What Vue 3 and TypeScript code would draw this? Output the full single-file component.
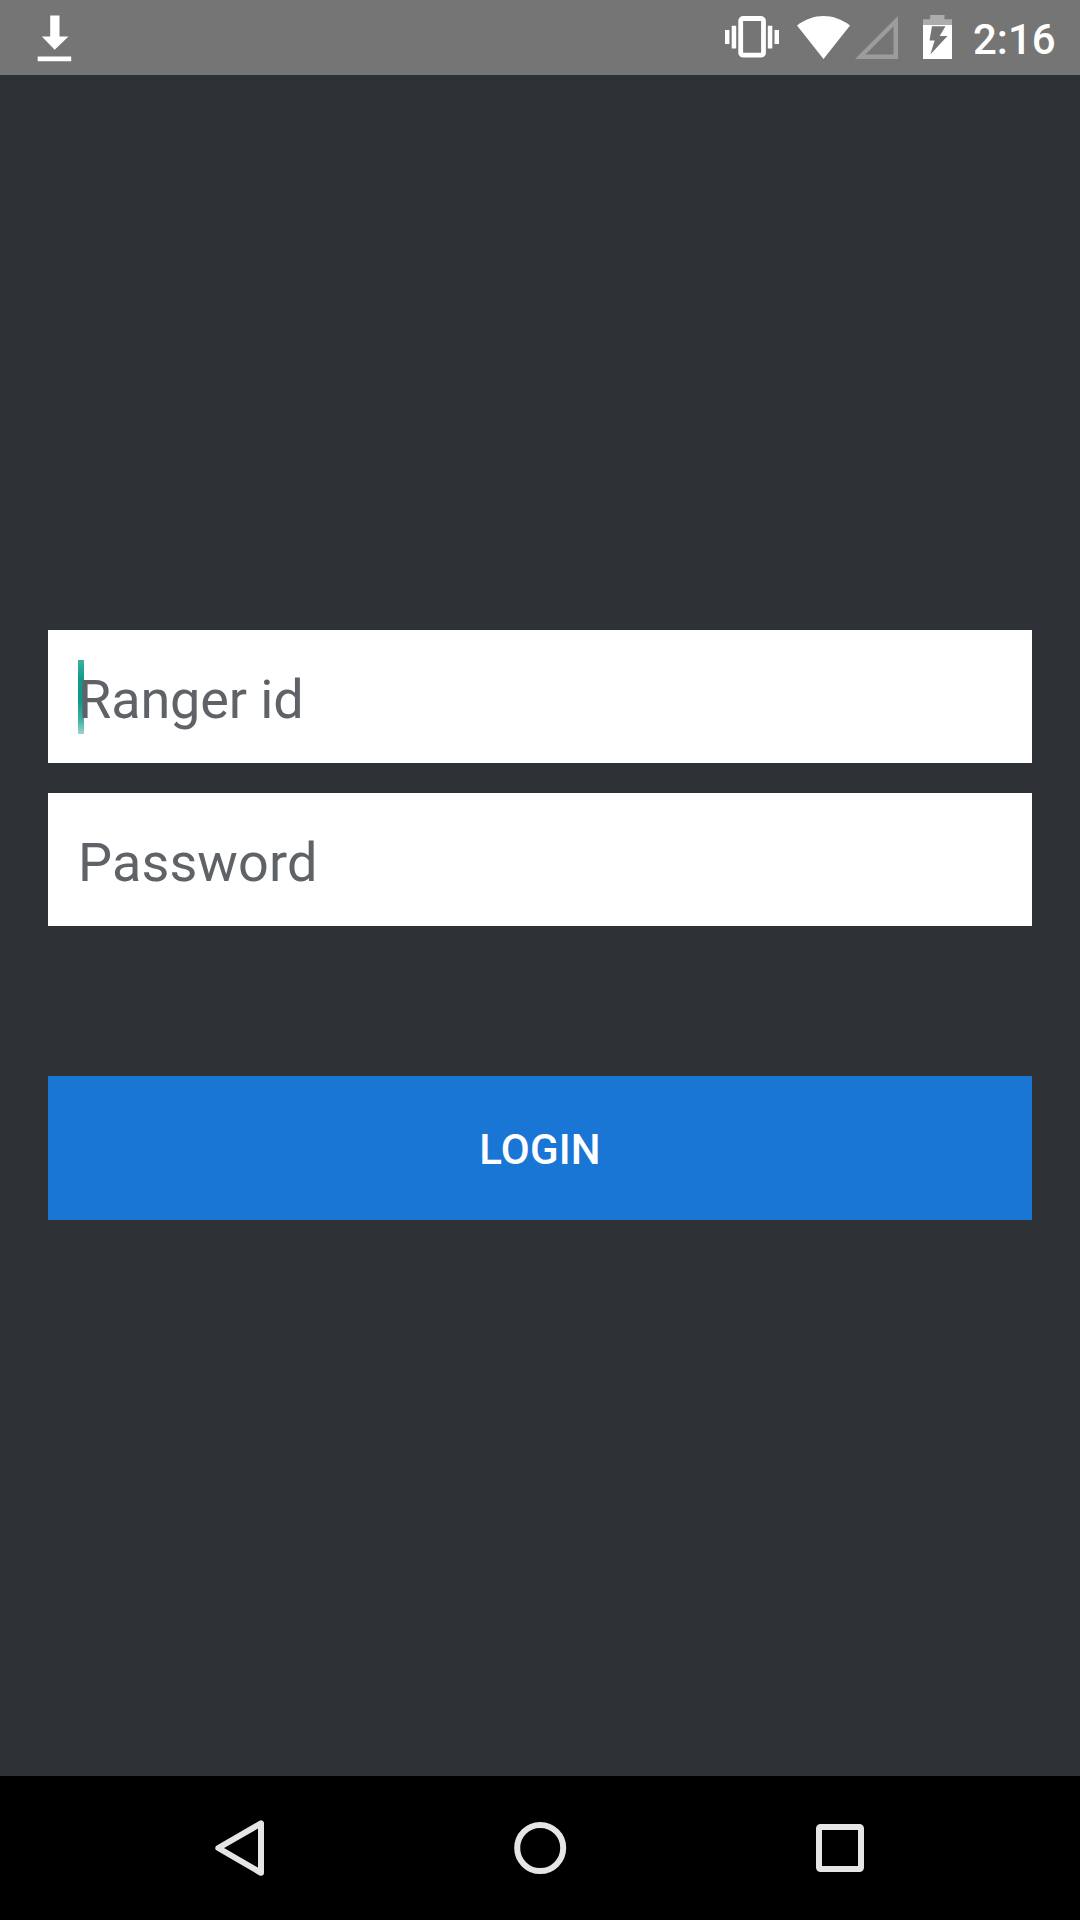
<script setup lang="ts">
import { ref } from 'vue'

interface Field {
  id: string
  hint: string
  focused: boolean
}

const time = ref('2:16')
const fields = ref<Field[]>([
  { id: 'ranger', hint: 'Ranger id', focused: true },
  { id: 'password', hint: 'Password', focused: false },
])
</script>

<template>
  <div class="screen">
    <header class="status-bar">
      <svg class="download" width="35" height="47" viewBox="-0.5 -0.5 35 47" fill="#fff">
        <path d="M12.700 0H22v21h9L17.200 34.200 4.300 21h8.400z" />
        <path d="M0.200 41h33.500v4.700H0.200z" />
      </svg>
      <div class="indicators">
        <svg class="vibrate" width="54" height="42" viewBox="0 0 54 42" fill="#fff">
          <rect x="15.700" y="2.500" width="22.800" height="36.700" rx="2.500" fill="none" stroke="#fff" stroke-width="4.800" />
          <path d="M0 14h4.400v14H0zM6.700 9.700h4.500v22.800H6.700zM42.800 9.700h4.500v22.800h-4.500zM49.500 14H54v14h-4.500z" />
        </svg>
        <svg class="wifi" width="54" height="43" viewBox="0 0 54 43">
          <path d="M0 9.500C8 3.300 17.500 0 26.500 0S45 3.300 53 9.500L26.500 43z" fill="#fff" />
        </svg>
        <svg class="signal" width="43" height="43" viewBox="0 0 43 43">
          <path d="M0 43L43 0v43zM10.500 38.500H38.500V10.500z" fill="#9c9c9c" fill-rule="evenodd" />
        </svg>
        <svg class="battery" width="29" height="44" viewBox="0 0 29 44">
          <path d="M7.200 0h14.300v4.200H29V10H0V4.200h7.200z" fill="#acacac" />
          <path d="M0 10h29v34H0z" fill="#fff" />
          <path d="M9 11.200h13.500L16.700 21H24.500L7.300 39.500 11.700 25.500H6.500z" fill="#757575" />
        </svg>
        <span class="time">{{ time }}</span>
      </div>
    </header>

    <main class="login">
      <div v-for="field in fields" :key="field.id" class="field" :class="field.id">
        <span v-if="field.focused" class="caret"></span>
        <span class="hint">{{ field.hint }}</span>
      </div>
      <button class="submit" type="button">LOGIN</button>
    </main>

    <nav class="nav-bar">
      <svg width="60" height="60" viewBox="0 0 60 60" fill="none" stroke="#e5e5e5" stroke-width="6" stroke-linejoin="round">
        <path d="M8.300 30L51 5.300v49.500z" />
      </svg>
      <svg width="60" height="60" viewBox="0 0 60 60" fill="none" stroke="#e5e5e5" stroke-width="6">
        <circle cx="30.200" cy="30" r="23" />
      </svg>
      <svg width="60" height="60" viewBox="0 0 60 60" fill="none" stroke="#e5e5e5" stroke-width="6">
        <rect x="9" y="9" width="42" height="42" rx="1.500" />
      </svg>
    </nav>
  </div>
</template>

<style>
body {
  margin: 0;
  background: #2e3135;
}
</style>

<style scoped>
.screen {
  display: flex;
  flex-direction: column;
  width: 1080px;
  height: 1920px;
  overflow: hidden;
  background: #2e3135;
  font-family: Roboto, 'Noto Sans', sans-serif;
}

svg {
  display: block;
  flex: none;
}

.status-bar {
  display: flex;
  justify-content: space-between;
  align-items: flex-start;
  box-sizing: border-box;
  height: 75px;
  padding: 15px 24px 0 37px;
  background: #757575;
  color: #fff;
}

.indicators {
  display: flex;
  align-items: flex-start;
}

.vibrate {
  margin: 1px 18px 0 0;
}

.wifi {
  margin: 1px 4px 0 0;
}

.signal {
  margin: 1px 25px 0 0;
}

.time {
  width: 83px;
  margin: 1px 0 0 21px;
  font-size: 42px;
  font-weight: 500;
  line-height: 48px;
  white-space: nowrap;
}

.login {
  display: flex;
  flex: 1;
  flex-direction: column;
  padding: 555px 48px 0;
}

.field {
  position: relative;
  display: flex;
  align-items: flex-start;
  box-sizing: border-box;
  height: 133px;
  margin-bottom: 30px;
  padding: 38px 30px 0;
  background: #fff;
}

.hint {
  position: relative;
  color: #5f6368;
  font-size: 54px;
  line-height: 63px;
}

.ranger .hint {
  letter-spacing: -0.12px;
}

.password .hint {
  letter-spacing: 0.12px;
}

.caret {
  position: absolute;
  top: 30px;
  left: 30px;
  width: 5.5px;
  height: 74px;
  background: linear-gradient(
    to bottom,
    #3fb0a4 0%,
    #0f9b8c 25%,
    #0c998a 55%,
    #45b1a6 82%,
    #9bd5ce 100%
  );
}

.submit {
  height: 144px;
  margin: 120px 0 0;
  padding: 4px 0 0;
  border: 0;
  background: #1976d5;
  color: #fff;
  font-family: inherit;
  font-size: 42px;
  font-weight: 500;
  letter-spacing: 0.2px;
  line-height: 48px;
}

.nav-bar {
  display: flex;
  justify-content: center;
  align-items: center;
  gap: 240px;
  height: 144px;
  background: #000;
}
</style>
